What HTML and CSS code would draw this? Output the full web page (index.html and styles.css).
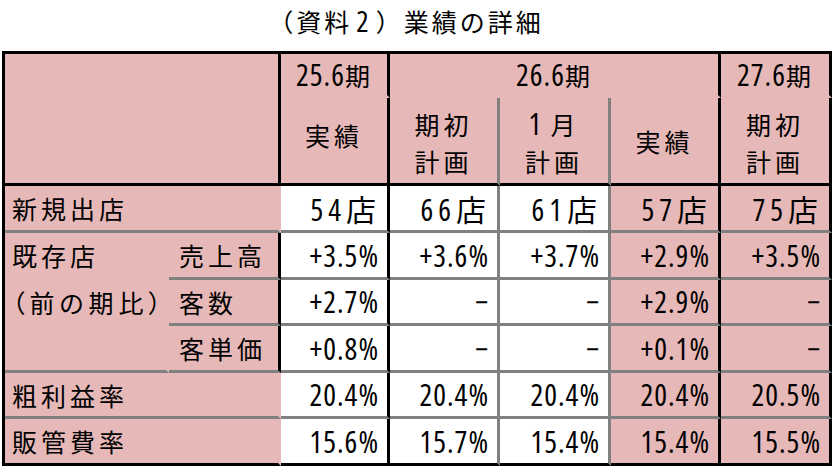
FILE: index.html
```html
<!DOCTYPE html>
<html lang="ja">
<head>
<meta charset="utf-8">
<link rel="stylesheet" href="styles.css">
</head>
<body>
<div class="title">（資料<span class="tn">2</span>）業績の詳細</div>
<table class="perf">
  <colgroup>
    <col class="w-a"><col class="w-b"><col class="w-c"><col class="w-d"><col class="w-e"><col class="w-f"><col class="w-g">
  </colgroup>
  <thead>
    <tr class="hr1">
      <th class="corner" colspan="2" rowspan="2"></th>
      <th class="bk"><span class="n">25.6</span>期</th>
      <th class="bk" colspan="3"><span class="n">26.6</span>期</th>
      <th class="bk"><span class="n">27.6</span>期</th>
    </tr>
    <tr class="hr2">
      <th class="bk lift">実績</th>
      <th class="gr two">期初<br>計画</th>
      <th class="gr two"><span class="n one">1</span>月<br>計画</th>
      <th class="bk">実績</th>
      <th class="bk two">期初<br>計画</th>
    </tr>
  </thead>
  <tbody>
    <tr class="r46">
      <th class="lab" colspan="2">新規出店</th>
      <td class="bk w num ten">54店</td>
      <td class="gr w num ten">66店</td>
      <td class="gr w num ten">61店</td>
      <td class="bk num ten">57店</td>
      <td class="bk num ten">75店</td>
    </tr>
    <tr class="r47">
      <th class="lab open">既存店</th>
      <th class="sub bk">売上高</th>
      <td class="bk w num">+3.5%</td>
      <td class="gr w num">+3.6%</td>
      <td class="gr w num">+3.7%</td>
      <td class="bk num">+2.9%</td>
      <td class="bk num">+3.5%</td>
    </tr>
    <tr class="r46">
      <th class="lab open palt">（前の期比）</th>
      <th class="sub bk">客数</th>
      <td class="bk w num">+2.7%</td>
      <td class="gr w num">−</td>
      <td class="gr w num">−</td>
      <td class="bk num">+2.9%</td>
      <td class="bk num">−</td>
    </tr>
    <tr class="r47">
      <th class="lab"></th>
      <th class="sub bk">客単価</th>
      <td class="bk w num">+0.8%</td>
      <td class="gr w num">−</td>
      <td class="gr w num">−</td>
      <td class="bk num">+0.1%</td>
      <td class="bk num">−</td>
    </tr>
    <tr class="r46">
      <th class="lab" colspan="2">粗利益率</th>
      <td class="bk w num">20.4%</td>
      <td class="gr w num">20.4%</td>
      <td class="gr w num">20.4%</td>
      <td class="bk num">20.4%</td>
      <td class="bk num">20.5%</td>
    </tr>
    <tr class="r47 last">
      <th class="lab" colspan="2">販管費率</th>
      <td class="bk w num">15.6%</td>
      <td class="gr w num">15.7%</td>
      <td class="gr w num">15.4%</td>
      <td class="bk num">15.4%</td>
      <td class="bk num">15.5%</td>
    </tr>
  </tbody>
</table>
</body>
</html>
```

FILE: styles.css
```css
html, body {
  margin: 0;
  padding: 0;
  background: #ffffff;
}
body {
  padding-left: 2px;
  font-family: "Noto Sans CJK JP", sans-serif;
  color: #000;
}
.title {
  box-sizing: border-box;
  height: 51px;
  line-height: 42px;
  font-size: 25px;
  letter-spacing: 3px;
  text-align: center;
  width: 830px;
  padding-right: 22px;
}
.tn {
  font-family: "Open Sans", sans-serif;
  font-stretch: 75%;
  font-size: 29px;
  letter-spacing: 0;
  margin: 0 7px 0 4px;
}
.n {
  font-family: "Open Sans", sans-serif;
  font-stretch: 75%;
  letter-spacing: 1px;
  font-size: 30px;
}
.perf {
  border-collapse: separate;
  border-spacing: 0;
  table-layout: fixed;
  width: 830px;
  border-top: 3px solid #000;
  border-left: 3px solid #000;
  font-size: 25px;
  letter-spacing: 4px;
}
.w-a { width: 164px; }
.w-b { width: 112px; }
.w-c { width: 109px; }
.w-d { width: 110px; }
.w-e { width: 111px; }
.w-f { width: 110px; }
.w-g { width: 111px; }
.perf th, .perf td {
  padding: 0;
  background: #e6b8b7;
  font-weight: normal;
  border-right: 3px solid transparent;
  border-bottom: 3px solid #808080;
  vertical-align: middle;
  white-space: nowrap;
}
.perf td.w { background: #ffffff; }
.perf .bk { border-right-color: #000; }
.perf .gr { border-right-color: #808080; }
.hr1 { height: 42px; }
.hr2 { height: 88px; }
.hr1 th { border-bottom-color: transparent; text-align: center; letter-spacing: 2px; }
.hr1 th.corner { border-bottom-color: #000; border-right-color: #000; }
.hr2 th { border-bottom-color: #000; text-align: center; }
.hr2 th.two { line-height: 37px; padding-top: 4px; }
.hr2 th.lift { padding-bottom: 12px; }
.one { margin-right: 8px; }
.r46 { height: 46px; }
.r47 { height: 47px; }
.last th, .last td { border-bottom-color: #000; }
.lab {
  text-align: left;
  padding-left: 7px !important;
}
.lab.open { border-bottom-color: transparent !important; }
.palt { font-feature-settings: "palt"; letter-spacing: 5px; }
.sub {
  text-align: left;
  padding-left: 10px !important;
}
.num {
  text-align: right;
  padding-right: 8px !important;
  font-family: "Open Sans", "Noto Sans CJK JP", sans-serif;
  font-stretch: 75%;
  font-size: 30px;
  letter-spacing: 1px;
}
.num.ten {
  letter-spacing: 5px;
  padding-right: 6px !important;
}
```
